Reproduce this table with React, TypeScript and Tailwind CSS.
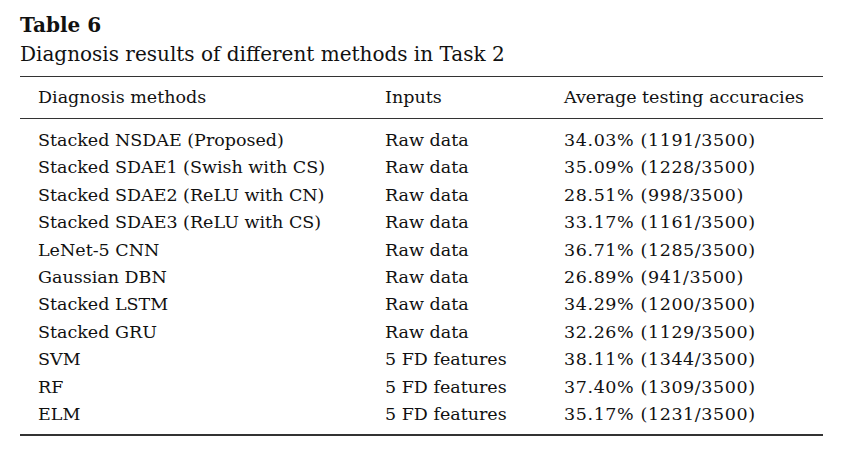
import React from "react";

const rows: [string, string, string][] = [
  ["Stacked NSDAE (Proposed)", "Raw data", "34.03% (1191/3500)"],
  ["Stacked SDAE1 (Swish with CS)", "Raw data", "35.09% (1228/3500)"],
  ["Stacked SDAE2 (ReLU with CN)", "Raw data", "28.51% (998/3500)"],
  ["Stacked SDAE3 (ReLU with CS)", "Raw data", "33.17% (1161/3500)"],
  ["LeNet-5 CNN", "Raw data", "36.71% (1285/3500)"],
  ["Gaussian DBN", "Raw data", "26.89% (941/3500)"],
  ["Stacked LSTM", "Raw data", "34.29% (1200/3500)"],
  ["Stacked GRU", "Raw data", "32.26% (1129/3500)"],
  ["SVM", "5 FD features", "38.11% (1344/3500)"],
  ["RF", "5 FD features", "37.40% (1309/3500)"],
  ["ELM", "5 FD features", "35.17% (1231/3500)"],
];

export default function App() {
  return (
    <div
      className="w-[843px] h-[456px] bg-white text-[#111] pl-[20px] pr-[20px] pt-[11px]"
      style={{ fontFamily: '"DejaVu Serif", serif' }}
    >
      <div className="text-[20px] font-bold leading-[28px]">Table 6</div>
      <div className="text-[20px] leading-[30px]">Diagnosis results of different methods in Task 2</div>
      <div className="mt-[7px] border-t-[1.5px] border-[#333]">
        <div className="grid grid-cols-[347px_179px_1fr] pl-[18px] text-[17.5px] leading-[41px] border-b-[1.5px] border-[#333]">
          <div>Diagnosis methods</div>
          <div>Inputs</div>
          <div>Average testing accuracies</div>
        </div>
        <div className="pt-[8px] pb-[6px] border-b-2 border-[#333]">
          {rows.map((r, i) => (
            <div key={i} className="grid grid-cols-[347px_179px_1fr] pl-[18px] text-[17.5px] h-[27.4px] leading-[27.4px]">
              <div>{r[0]}</div>
              <div>{r[1]}</div>
              <div className="tracking-[0.6px]">{r[2]}</div>
            </div>
          ))}
        </div>
      </div>
    </div>
  );
}
